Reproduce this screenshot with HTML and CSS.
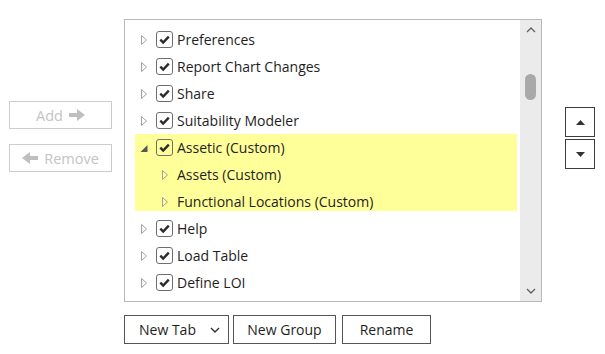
FILE: index.html
```html
<!DOCTYPE html>
<html>
<head>
<meta charset="utf-8">
<link rel="stylesheet" href="styles.css">
</head>
<body>
<div class="page">
  <div class="side-left">
    <button class="btn-move" disabled>Add <svg class="arr" width="16" height="12" viewBox="0 0 16 12"><path d="M0 4h8V0l8 6-8 6V8H0z"/></svg></button>
    <button class="btn-move" disabled><svg class="arr" width="16" height="12" viewBox="0 0 16 12"><path d="M16 4H8V0L0 6l8 6V8h8z"/></svg> Remove</button>
  </div>

  <div class="listbox">
    <div class="tree">
      <div class="row"><span class="exp"><svg width="8" height="12" viewBox="0 0 8 12"><path d="M1.5 1.5l5 4.5-5 4.5z" class="tri-open"/></svg></span><span class="chk"><svg width="15" height="15" viewBox="0 0 15 15"><path d="M3.3 7.6l2.9 2.9 5.6-5.8"/></svg></span><span class="lbl">Preferences</span></div>
      <div class="row"><span class="exp"><svg width="8" height="12" viewBox="0 0 8 12"><path d="M1.5 1.5l5 4.5-5 4.5z" class="tri-open"/></svg></span><span class="chk"><svg width="15" height="15" viewBox="0 0 15 15"><path d="M3.3 7.6l2.9 2.9 5.6-5.8"/></svg></span><span class="lbl">Report Chart Changes</span></div>
      <div class="row"><span class="exp"><svg width="8" height="12" viewBox="0 0 8 12"><path d="M1.5 1.5l5 4.5-5 4.5z" class="tri-open"/></svg></span><span class="chk"><svg width="15" height="15" viewBox="0 0 15 15"><path d="M3.3 7.6l2.9 2.9 5.6-5.8"/></svg></span><span class="lbl">Share</span></div>
      <div class="row"><span class="exp"><svg width="8" height="12" viewBox="0 0 8 12"><path d="M1.5 1.5l5 4.5-5 4.5z" class="tri-open"/></svg></span><span class="chk"><svg width="15" height="15" viewBox="0 0 15 15"><path d="M3.3 7.6l2.9 2.9 5.6-5.8"/></svg></span><span class="lbl">Suitability Modeler</span></div>
      <div class="group-hl">
        <div class="row"><span class="exp"><svg width="8" height="12" viewBox="0 0 8 12"><path d="M7.5 3v7H0.5z" class="tri-down"/></svg></span><span class="chk"><svg width="15" height="15" viewBox="0 0 15 15"><path d="M3.3 7.6l2.9 2.9 5.6-5.8"/></svg></span><span class="lbl">Assetic (Custom)</span></div>
        <div class="row child"><span class="indent"></span><span class="exp"><svg width="8" height="12" viewBox="0 0 8 12"><path d="M1.5 1.5l5 4.5-5 4.5z" class="tri-open"/></svg></span><span class="lbl">Assets (Custom)</span></div>
        <div class="row child"><span class="indent"></span><span class="exp"><svg width="8" height="12" viewBox="0 0 8 12"><path d="M1.5 1.5l5 4.5-5 4.5z" class="tri-open"/></svg></span><span class="lbl">Functional Locations (Custom)</span></div>
      </div>
      <div class="row"><span class="exp"><svg width="8" height="12" viewBox="0 0 8 12"><path d="M1.5 1.5l5 4.5-5 4.5z" class="tri-open"/></svg></span><span class="chk"><svg width="15" height="15" viewBox="0 0 15 15"><path d="M3.3 7.6l2.9 2.9 5.6-5.8"/></svg></span><span class="lbl">Help</span></div>
      <div class="row"><span class="exp"><svg width="8" height="12" viewBox="0 0 8 12"><path d="M1.5 1.5l5 4.5-5 4.5z" class="tri-open"/></svg></span><span class="chk"><svg width="15" height="15" viewBox="0 0 15 15"><path d="M3.3 7.6l2.9 2.9 5.6-5.8"/></svg></span><span class="lbl">Load Table</span></div>
      <div class="row"><span class="exp"><svg width="8" height="12" viewBox="0 0 8 12"><path d="M1.5 1.5l5 4.5-5 4.5z" class="tri-open"/></svg></span><span class="chk"><svg width="15" height="15" viewBox="0 0 15 15"><path d="M3.3 7.6l2.9 2.9 5.6-5.8"/></svg></span><span class="lbl">Define LOI</span></div>
    </div>
    <div class="vscroll">
      <svg class="sarrow" width="10" height="6" viewBox="0 0 10 6"><path d="M1 5l4-4 4 4"/></svg>
      <div class="track"><div class="thumb"></div></div>
      <svg class="sarrow" width="10" height="6" viewBox="0 0 10 6"><path d="M1 1l4 4 4-4"/></svg>
    </div>
  </div>

  <div class="side-right">
    <button class="btn-sq"><svg width="9" height="5" viewBox="0 0 9 5"><path d="M0 5L4.5 0 9 5z"/></svg></button>
    <button class="btn-sq"><svg width="9" height="5" viewBox="0 0 9 5"><path d="M0 0h9L4.5 5z"/></svg></button>
  </div>

  <div class="bottom">
    <button class="btn btn-tab">New Tab <svg width="10" height="6" viewBox="0 0 10 6"><path d="M1 1l4 4 4-4"/></svg></button>
    <button class="btn btn-group">New Group</button>
    <button class="btn btn-rename">Rename</button>
  </div>
</div>
</body>
</html>
```
FILE: styles.css
```css
* { box-sizing: border-box; }
html, body { margin: 0; padding: 0; background: #fff; }
body {
  font-family: "Open Sans", "Noto Sans", sans-serif;
  font-size: 14px;
  color: #1e1e1e;
  width: 605px;
  height: 354px;
  overflow: hidden;
}
.page {
  display: grid;
  grid-template-columns: 124px 418px 63px;
  grid-template-rows: 283px auto;
  row-gap: 13px;
  padding-top: 19px;
}
.side-left {
  padding: 82px 0 0 9px;
  display: flex;
  flex-direction: column;
  gap: 15px;
}
.btn-move {
  width: 103px;
  height: 28px;
  border: 1px solid #cccccc;
  background: #fff;
  color: #c4c4c4;
  font: inherit;
  font-size: 14.5px;
  display: flex;
  align-items: center;
  justify-content: center;
  gap: 6px;
  padding: 0;
}
.btn-move .arr { fill: #bfbfbf; }

.listbox {
  border: 1px solid #b9b9b9;
  display: flex;
  height: 283px;
  overflow: hidden;
}
.tree {
  flex: 1;
  padding: 6px 3px 0 10px;
}
.row {
  height: 27px;
  display: flex;
  align-items: center;
}
.exp {
  width: 21px;
  padding-left: 5px;
  display: flex;
  align-items: center;
}
.tri-open { fill: none; stroke: #a0a0a0; stroke-width: 1; }
.tri-down { fill: #555; }
.indent { width: 21px; }
.chk {
  width: 17px;
  height: 17px;
  border: 1px solid #6e6e6e;
  border-radius: 3px;
  display: flex;
  align-items: center;
  justify-content: center;
  margin-right: 4px;
}
.chk path { fill: none; stroke: #2b2b2b; stroke-width: 2.4; }
.lbl { white-space: nowrap; }
.group-hl {
  background: linear-gradient(#ffff99, #ffff99) top left / 100% calc(100% - 4px) no-repeat;
}

.vscroll {
  width: 21px;
  background: #ebebeb;
  display: flex;
  flex-direction: column;
  align-items: center;
  padding: 7px 0 7px;
}
.sarrow path { fill: none; stroke: #606060; stroke-width: 1.3; }
.track { flex: 1; width: 100%; padding-top: 41px; display: flex; justify-content: center; }
.thumb { width: 11px; height: 26px; border-radius: 6px; background: #a9a9a9; }

.side-right {
  padding: 88px 0 0 23px;
  display: flex;
  flex-direction: column;
  gap: 2px;
}
.btn-sq {
  width: 30px;
  height: 30px;
  border: 1px solid #3c3c3c;
  background: #fff;
  display: flex;
  align-items: center;
  justify-content: center;
  padding: 0;
}
.btn-sq path { fill: #333; }

.bottom {
  grid-column: 2 / 4;
  display: flex;
  gap: 4px;
}
.btn {
  height: 29px;
  border: 1px solid #555;
  background: #fff;
  font: inherit;
  color: #1e1e1e;
  padding: 0;
  display: flex;
  align-items: center;
  justify-content: center;
}
.btn-tab { width: 105px; justify-content: flex-start; padding-left: 14px; }
.btn-tab svg { margin-left: auto; margin-right: 8px; }
.btn-tab path { fill: none; stroke: #333; stroke-width: 1.4; }
.btn-group { width: 103px; }
.btn-rename { width: 89px; margin-left: 2px; }
```
